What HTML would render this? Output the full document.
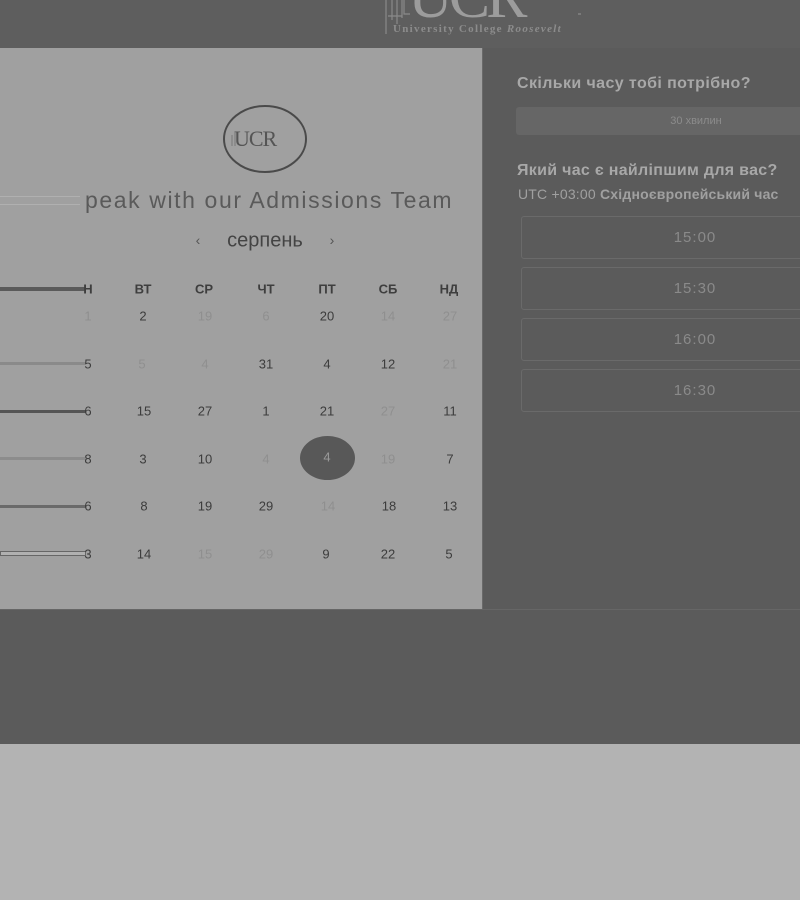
<!DOCTYPE html>
<html><head><meta charset="utf-8"><style>
*{margin:0;padding:0;box-sizing:border-box}
body{width:800px;height:900px;background:#b3b3b3;position:relative;overflow:hidden;font-family:"Liberation Sans","DejaVu Sans",sans-serif}
.a{position:absolute}
.top{left:0;top:0;width:800px;height:48px;background:#5e5e5e}
.left{left:0;top:48px;width:482px;height:561px;background:#a0a0a0}
.right{left:482px;top:48px;width:318px;height:561px;background:#5b5b5b;border-left:1px solid #6a6a6a}
.band{left:0;top:609px;width:800px;height:135px;background:#5b5b5b;border-top:1px solid #666}
.c{position:absolute;transform:translate(-50%,-50%);font-size:13px;color:#3c3c3c;white-space:nowrap}
.h{font-weight:bold;font-size:13px;color:#3e3e3e}
.f{color:#8f8f8f}
.slot{position:absolute;left:521px;width:348px;height:43px;border:1px solid #6a6a6a;border-radius:3px;color:#8a8a8a;font-size:15px;text-align:center;line-height:41px;letter-spacing:1px}
.bar{position:absolute;left:0;width:86px;height:3px;background:#6e6e6e}
</style></head><body>
<div class="a top"></div>
<svg class="a" style="left:378px;top:0" width="210" height="40">
<g stroke="#8a8a8a" fill="none" stroke-width="1.2"><path d="M8 0V34M14 0V20M19 0V24M24 0V18M10 16h14M26 0V14h6M200 14h3"/></g>
<text x="30" y="17" font-family="Liberation Serif" font-size="62" fill="#9c9c9c" letter-spacing="-4">UCR</text>
<text x="15" y="32" font-family="Liberation Serif" font-size="11" fill="#8c8c8c" letter-spacing="1.3" font-weight="bold">University College <tspan font-style="italic">Roosevelt</tspan></text>
</svg>
<div class="a left"></div>
<div class="a right"></div>
<div class="a band"></div>
<svg class="a" style="left:221px;top:105px" width="88" height="70"><ellipse cx="44" cy="34" rx="41" ry="33" stroke="#4a4a4a" stroke-width="2" fill="none"/><text x="13" y="41" font-family="Liberation Serif" font-size="22" fill="#555" letter-spacing="-1">UCR</text><path d="M11 41V30M14 41V27" stroke="#777"/></svg>
<div class="a" style="left:0;top:196px;width:80px;height:1px;background:#b0b0b0"></div>
<div class="a" style="left:0;top:204px;width:80px;height:1px;background:#b0b0b0"></div>
<div class="a" style="left:85px;top:187px;font-size:23px;color:#5a5a5a;letter-spacing:1.6px">peak with our Admissions Team</div>
<div class="c" style="left:198px;top:240px;color:#555;font-size:14px">‹</div>
<div class="c" style="left:265px;top:241px;font-size:20px;color:#444">серпень</div>
<div class="c" style="left:332px;top:240px;color:#555;font-size:14px">›</div>
<div class="bar" style="top:287px;height:4px;background:#5a5a5a"></div>
<div class="bar" style="top:362px;background:#8a8a8a"></div>
<div class="bar" style="top:410px;background:#555"></div>
<div class="bar" style="top:457px;background:#8c8c8c"></div>
<div class="bar" style="top:505px;background:#6a6a6a"></div>
<div class="bar" style="top:551px;height:5px;background:#b0b0b0;border:1px solid #666"></div>
<div class="a" style="left:300px;top:436px;width:55px;height:44px;border-radius:50%;background:#585858"></div>
<div class="c h" style="left:88px;top:289px">Н</div><div class="c h" style="left:143px;top:289px">ВТ</div><div class="c h" style="left:204px;top:289px">СР</div><div class="c h" style="left:266px;top:289px">ЧТ</div><div class="c h" style="left:327px;top:289px">ПТ</div><div class="c h" style="left:388px;top:289px">СБ</div><div class="c h" style="left:449px;top:289px">НД</div>
<div class="c f" style="left:88px;top:316px">1</div><div class="c" style="left:143px;top:316px">2</div><div class="c f" style="left:205px;top:316px">19</div><div class="c f" style="left:266px;top:316px">6</div><div class="c" style="left:327px;top:316px">20</div><div class="c f" style="left:388px;top:316px">14</div><div class="c f" style="left:450px;top:316px">27</div>
<div class="c" style="left:88px;top:364px">5</div><div class="c f" style="left:142px;top:364px">5</div><div class="c f" style="left:205px;top:364px">4</div><div class="c" style="left:266px;top:364px">31</div><div class="c" style="left:327px;top:364px">4</div><div class="c" style="left:388px;top:364px">12</div><div class="c f" style="left:450px;top:364px">21</div>
<div class="c" style="left:88px;top:411px">6</div><div class="c" style="left:144px;top:411px">15</div><div class="c" style="left:205px;top:411px">27</div><div class="c" style="left:266px;top:411px">1</div><div class="c" style="left:327px;top:411px">21</div><div class="c f" style="left:388px;top:411px">27</div><div class="c" style="left:450px;top:411px">11</div>
<div class="c" style="left:88px;top:459px">8</div><div class="c" style="left:143px;top:459px">3</div><div class="c" style="left:205px;top:459px">10</div><div class="c f" style="left:266px;top:459px">4</div><div class="c" style="left:327px;top:457px;color:#999">4</div><div class="c f" style="left:388px;top:459px">19</div><div class="c" style="left:450px;top:459px">7</div>
<div class="c" style="left:88px;top:506px">6</div><div class="c" style="left:144px;top:506px">8</div><div class="c" style="left:205px;top:506px">19</div><div class="c" style="left:266px;top:506px">29</div><div class="c f" style="left:328px;top:506px">14</div><div class="c" style="left:389px;top:506px">18</div><div class="c" style="left:450px;top:506px">13</div>
<div class="c" style="left:88px;top:554px">3</div><div class="c" style="left:144px;top:554px">14</div><div class="c f" style="left:205px;top:554px">15</div><div class="c f" style="left:266px;top:554px">29</div><div class="c" style="left:326px;top:554px">9</div><div class="c" style="left:388px;top:554px">22</div><div class="c" style="left:449px;top:554px">5</div>
<div class="a" style="left:517px;top:75px;font-size:16px;font-weight:bold;color:#a8a8a8;letter-spacing:0.4px;white-space:nowrap">Скільки часу тобі потрібно?</div>
<div class="a" style="left:516px;top:107px;width:290px;height:28px;background:#666;border-radius:3px;color:#8c8c8c;font-size:11px;text-align:center;line-height:28px;padding-left:70px">30 хвилин</div>
<div class="a" style="left:517px;top:162px;font-size:16px;font-weight:bold;color:#a8a8a8;letter-spacing:0.3px;white-space:nowrap">Який час є найліпшим для вас?</div>
<div class="a" style="left:518px;top:186px;font-size:14px;color:#a0a0a0;white-space:nowrap;letter-spacing:0.2px">UTC +03:00 <b>Східноєвропейський час</b></div>
<div class="slot" style="top:216px">15:00</div>
<div class="slot" style="top:267px">15:30</div>
<div class="slot" style="top:318px">16:00</div>
<div class="slot" style="top:369px">16:30</div>
</body></html>
